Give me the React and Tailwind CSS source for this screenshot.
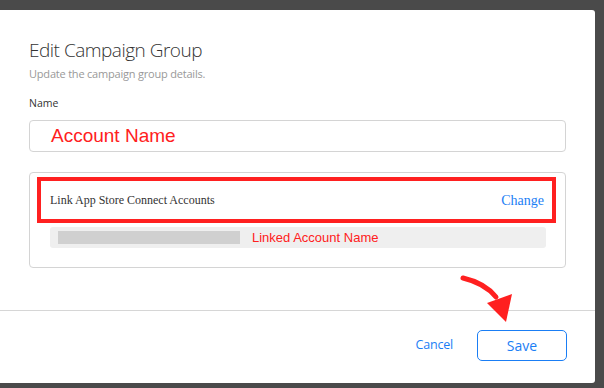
import React from 'react';

const Arrow = () => (
  <svg className="absolute left-[450px] top-[268px]" width="80" height="64" viewBox="0 0 80 64">
    <path d="M13 10 C 26 13, 38 19, 46 29" fill="none" stroke="#ff2020" strokeWidth="5" strokeLinecap="round" />
    <polygon points="37,35 62,26 56,54" fill="#ff2020" />
  </svg>
);

const App = () => {
  return (
    <div className="relative w-[604px] h-[388px] bg-[#4a4a4a] pt-[10px] pr-[9px] pb-[5px] overflow-hidden">
      <div className="h-full bg-white rounded-r-[3px] flex flex-col">
        <div className="px-[29px] pt-[26px] flex-1">
          <h1 className="font-['Open_Sans',sans-serif] font-light text-[19px] tracking-[-0.5px] leading-[28px] text-[#333]">
            Edit Campaign Group
          </h1>
          <p className="font-['Open_Sans',sans-serif] text-[11px] tracking-[-0.2px] leading-[16px] text-[#999] mt-[2px]">
            Update the campaign group details.
          </p>
          <label className="block font-['Open_Sans',sans-serif] text-[10.5px] leading-[14px] text-[#333] mt-[14px]">
            Name
          </label>
          <div className="mt-[10px] h-[32px] border border-[#d4d4d4] rounded-[4px] flex items-center pl-[21px]">
            <span className="font-['Liberation_Sans',sans-serif] text-[19px] text-[#ff2020]">Account Name</span>
          </div>
          <div className="mt-[20px] h-[96px] border border-[#d4d4d4] rounded-[4px] pt-[4px] pl-[7px] pr-[9px]">
            <div className="h-[46px] border-[4px] border-[#ff2020] flex items-center justify-between pl-[9px] pr-[8px]">
              <span className="font-['Liberation_Serif',serif] text-[12px] text-[#333]">Link App Store Connect Accounts</span>
              <span className="font-['Liberation_Serif',serif] text-[14px] text-[#1a7ef5]">Change</span>
            </div>
            <div className="mt-[4px] ml-[13px] mr-[10px] h-[21px] bg-[#efefef] rounded-[3px] flex items-center pl-[8px]">
              <div className="w-[182px] h-[13px] bg-[#d0d0d0]" />
              <span className="ml-[12px] font-['Liberation_Sans',sans-serif] text-[13px] text-[#ff2020]">Linked Account Name</span>
            </div>
          </div>
        </div>
        <div className="h-[73px] border-t border-[#d6d6d6] flex items-center justify-end pr-[28px] pb-[3px]">
          <button className="font-['Open_Sans',sans-serif] text-[12.5px] tracking-[-0.2px] text-[#1a7ef5] mr-[24px]">Cancel</button>
          <button className="w-[90px] h-[31px] border border-[#1a7ef5] rounded-[5px] font-['Open_Sans',sans-serif] text-[14px] text-[#1a7ef5]">
            Save
          </button>
        </div>
      </div>
      <Arrow />
    </div>
  );
};

export default App;
